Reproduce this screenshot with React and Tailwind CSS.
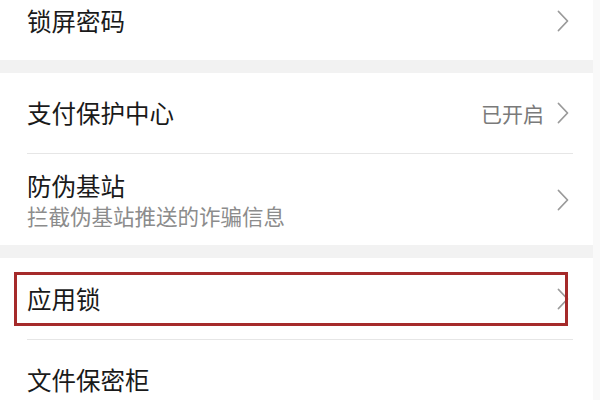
import React from "react";

const font = { fontFamily: '"Noto Sans CJK SC", "Noto Sans", sans-serif' };

function Chevron() {
  return (
    <svg width="12" height="22" viewBox="0 0 12 22" className="shrink-0">
      <path d="M1.5 1.5 L10.5 11 L1.5 20.5" fill="none" stroke="#9a9a9a" strokeWidth="1.8" strokeLinecap="round" strokeLinejoin="round" />
    </svg>
  );
}

function Row({ title, value, h, chevron = true }) {
  return (
    <div className={`relative flex items-center pl-[27px] pr-[24px] ${h}`}>
      <div className="flex-1">
        <div className="text-[24.5px] leading-[32px] text-[#1a1a1a]">{title}</div>
      </div>
      {value && <span className="mr-[13px] text-[21px] leading-[28px] text-[#7a7a7a]">{value}</span>}
      {chevron && <Chevron />}
    </div>
  );
}

function Divider() {
  return <div className="ml-[27px] mr-[20px] h-px bg-[#e6e6e6]" />;
}

function Band() {
  return <div className="h-[13px] bg-[#f2f2f2]" />;
}

export default function App() {
  return (
    <div className="flex h-[400px] w-[600px] overflow-hidden bg-white" style={font}>
      <div className="-mt-[19px] w-[593px] shrink-0">
        <Row title="锁屏密码" h="h-[79px]" />
        <Band />
        <Row title="支付保护中心" value="已开启" h="h-[80px]" />
        <Divider />
        <div className="relative flex h-[91px] items-start pl-[27px] pr-[24px] pt-[16px]">
          <div className="flex-1">
            <div className="text-[24.5px] leading-[32px] text-[#1a1a1a]">防伪基站</div>
            <div className="text-[21.5px] leading-[28px] text-[#8c8c8c]">拦截伪基站推送的诈骗信息</div>
          </div>
          <div className="mt-[19px]">
            <Chevron />
          </div>
        </div>
        <Band />
        <div className="relative">
          <Row title="应用锁" h="h-[81px]" />
          <div className="pointer-events-none absolute bottom-[13px] left-[14px] right-[25px] top-[14px] border-[3px] border-[#a52a2a]" />
        </div>
        <Divider />
        <Row title="文件保密柜" h="h-[80px]" chevron={false} />
      </div>
      <div className="flex-1 bg-[#f9f9f9]" />
    </div>
  );
}
